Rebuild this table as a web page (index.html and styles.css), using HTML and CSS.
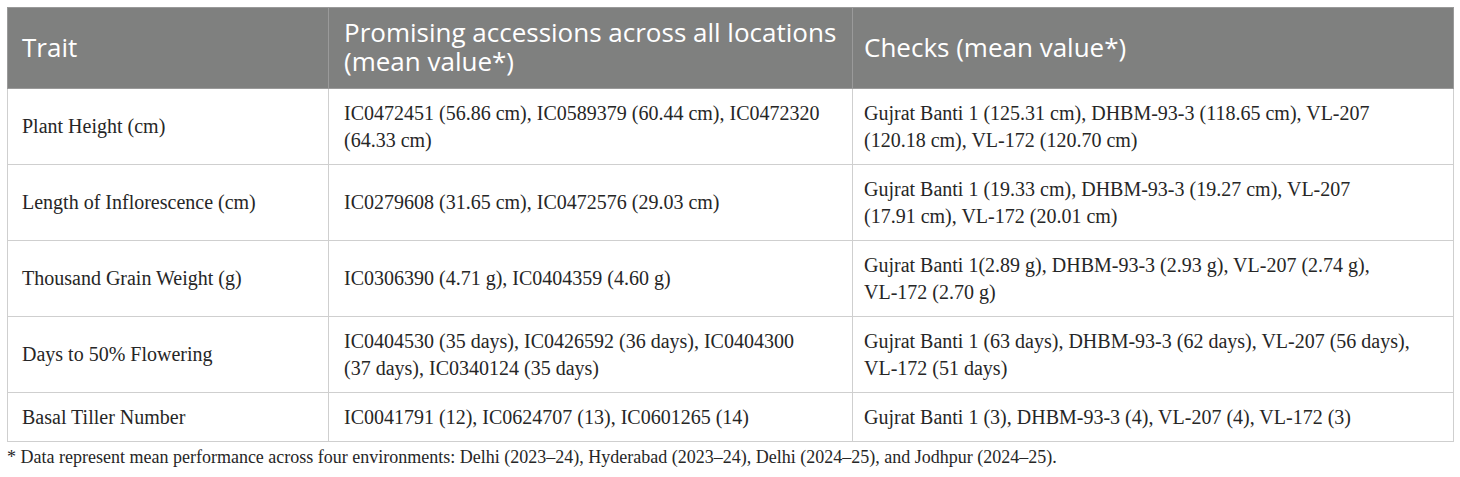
FILE: index.html
```html
<!DOCTYPE html>
<html>
<head>
<meta charset="utf-8">
<link rel="stylesheet" href="styles.css">
</head>
<body>
<div class="wrap">
<table class="data">
<colgroup><col class="c1"><col class="c2"><col class="c3"></colgroup>
<thead>
<tr><th>Trait</th><th>Promising accessions across all locations (mean value*)</th><th>Checks (mean value*)</th></tr>
</thead>
<tbody>
<tr><td>Plant Height (cm)</td><td>IC0472451 (56.86&nbsp;cm), IC0589379 (60.44&nbsp;cm), IC0472320 (64.33&nbsp;cm)</td><td>Gujrat Banti 1 (125.31&nbsp;cm), <span class="nw">DHBM-93-3</span> (118.65&nbsp;cm), <span class="nw">VL-207</span> (120.18&nbsp;cm), <span class="nw">VL-172</span> (120.70&nbsp;cm)</td></tr>
<tr><td>Length of Inflorescence (cm)</td><td>IC0279608 (31.65&nbsp;cm), IC0472576 (29.03&nbsp;cm)</td><td>Gujrat Banti 1 (19.33&nbsp;cm), <span class="nw">DHBM-93-3</span> (19.27&nbsp;cm), <span class="nw">VL-207</span> (17.91&nbsp;cm), <span class="nw">VL-172</span> (20.01&nbsp;cm)</td></tr>
<tr><td>Thousand Grain Weight (g)</td><td>IC0306390 (4.71&nbsp;g), IC0404359 (4.60&nbsp;g)</td><td>Gujrat Banti 1(2.89&nbsp;g), <span class="nw">DHBM-93-3</span> (2.93&nbsp;g), <span class="nw">VL-207</span> (2.74&nbsp;g), <span class="nw">VL-172</span> (2.70&nbsp;g)</td></tr>
<tr><td>Days to 50% Flowering</td><td>IC0404530 (35&nbsp;days), IC0426592 (36&nbsp;days), IC0404300 (37&nbsp;days), IC0340124 (35&nbsp;days)</td><td>Gujrat Banti 1 (63&nbsp;days), <span class="nw">DHBM-93-3</span> (62&nbsp;days), <span class="nw">VL-207</span> (56&nbsp;days), <span class="nw">VL-172</span> (51&nbsp;days)</td></tr>
<tr><td>Basal Tiller Number</td><td>IC0041791 (12), IC0624707 (13), IC0601265 (14)</td><td>Gujrat Banti 1 (3), <span class="nw">DHBM-93-3</span> (4), <span class="nw">VL-207</span> (4), <span class="nw">VL-172</span> (3)</td></tr>
</tbody>
</table>
<p class="note">* Data represent mean performance across four environments: Delhi (2023–24), Hyderabad (2023–24), Delhi (2024–25), and Jodhpur (2024–25).</p>
</div>
</body>
</html>
```
FILE: styles.css
```css
html, body { margin: 0; padding: 0; background: #fff; }
.wrap { padding: 7px 7px 0 7px; }
.data {
  border-collapse: collapse;
  width: 1446px;
  table-layout: fixed;
}
.c1 { width: 321px; }
.c2 { width: 524px; }
.c3 { width: 601px; }
.data th, .data td { border: 1px solid #cfcfcf; text-align: left; vertical-align: middle; }
.data th {
  background: #7f807f;
  color: #fff;
  font-family: "Open Sans", "Noto Sans", sans-serif;
  font-weight: 400;
  font-size: 26px;
  line-height: 29px;
  padding: 9px 8px 11px 15px;
  height: 60px;
  border-color: #9a9a9a;
}
.data td {
  font-family: "Liberation Serif", serif;
  font-size: 20px;
  line-height: 27px;
  color: #262626;
  padding: 10.5px 28px 10.5px 15px;
}
.data th:first-child, .data td:first-child { padding-left: 14px; }
.data th:last-child, .data td:last-child { padding-left: 11px; }
.nw { white-space: nowrap; }
.note {
  margin: 4px 0 0 0;
  font-family: "Liberation Serif", serif;
  font-size: 18px;
  line-height: 22px;
  color: #262626;
}
```
